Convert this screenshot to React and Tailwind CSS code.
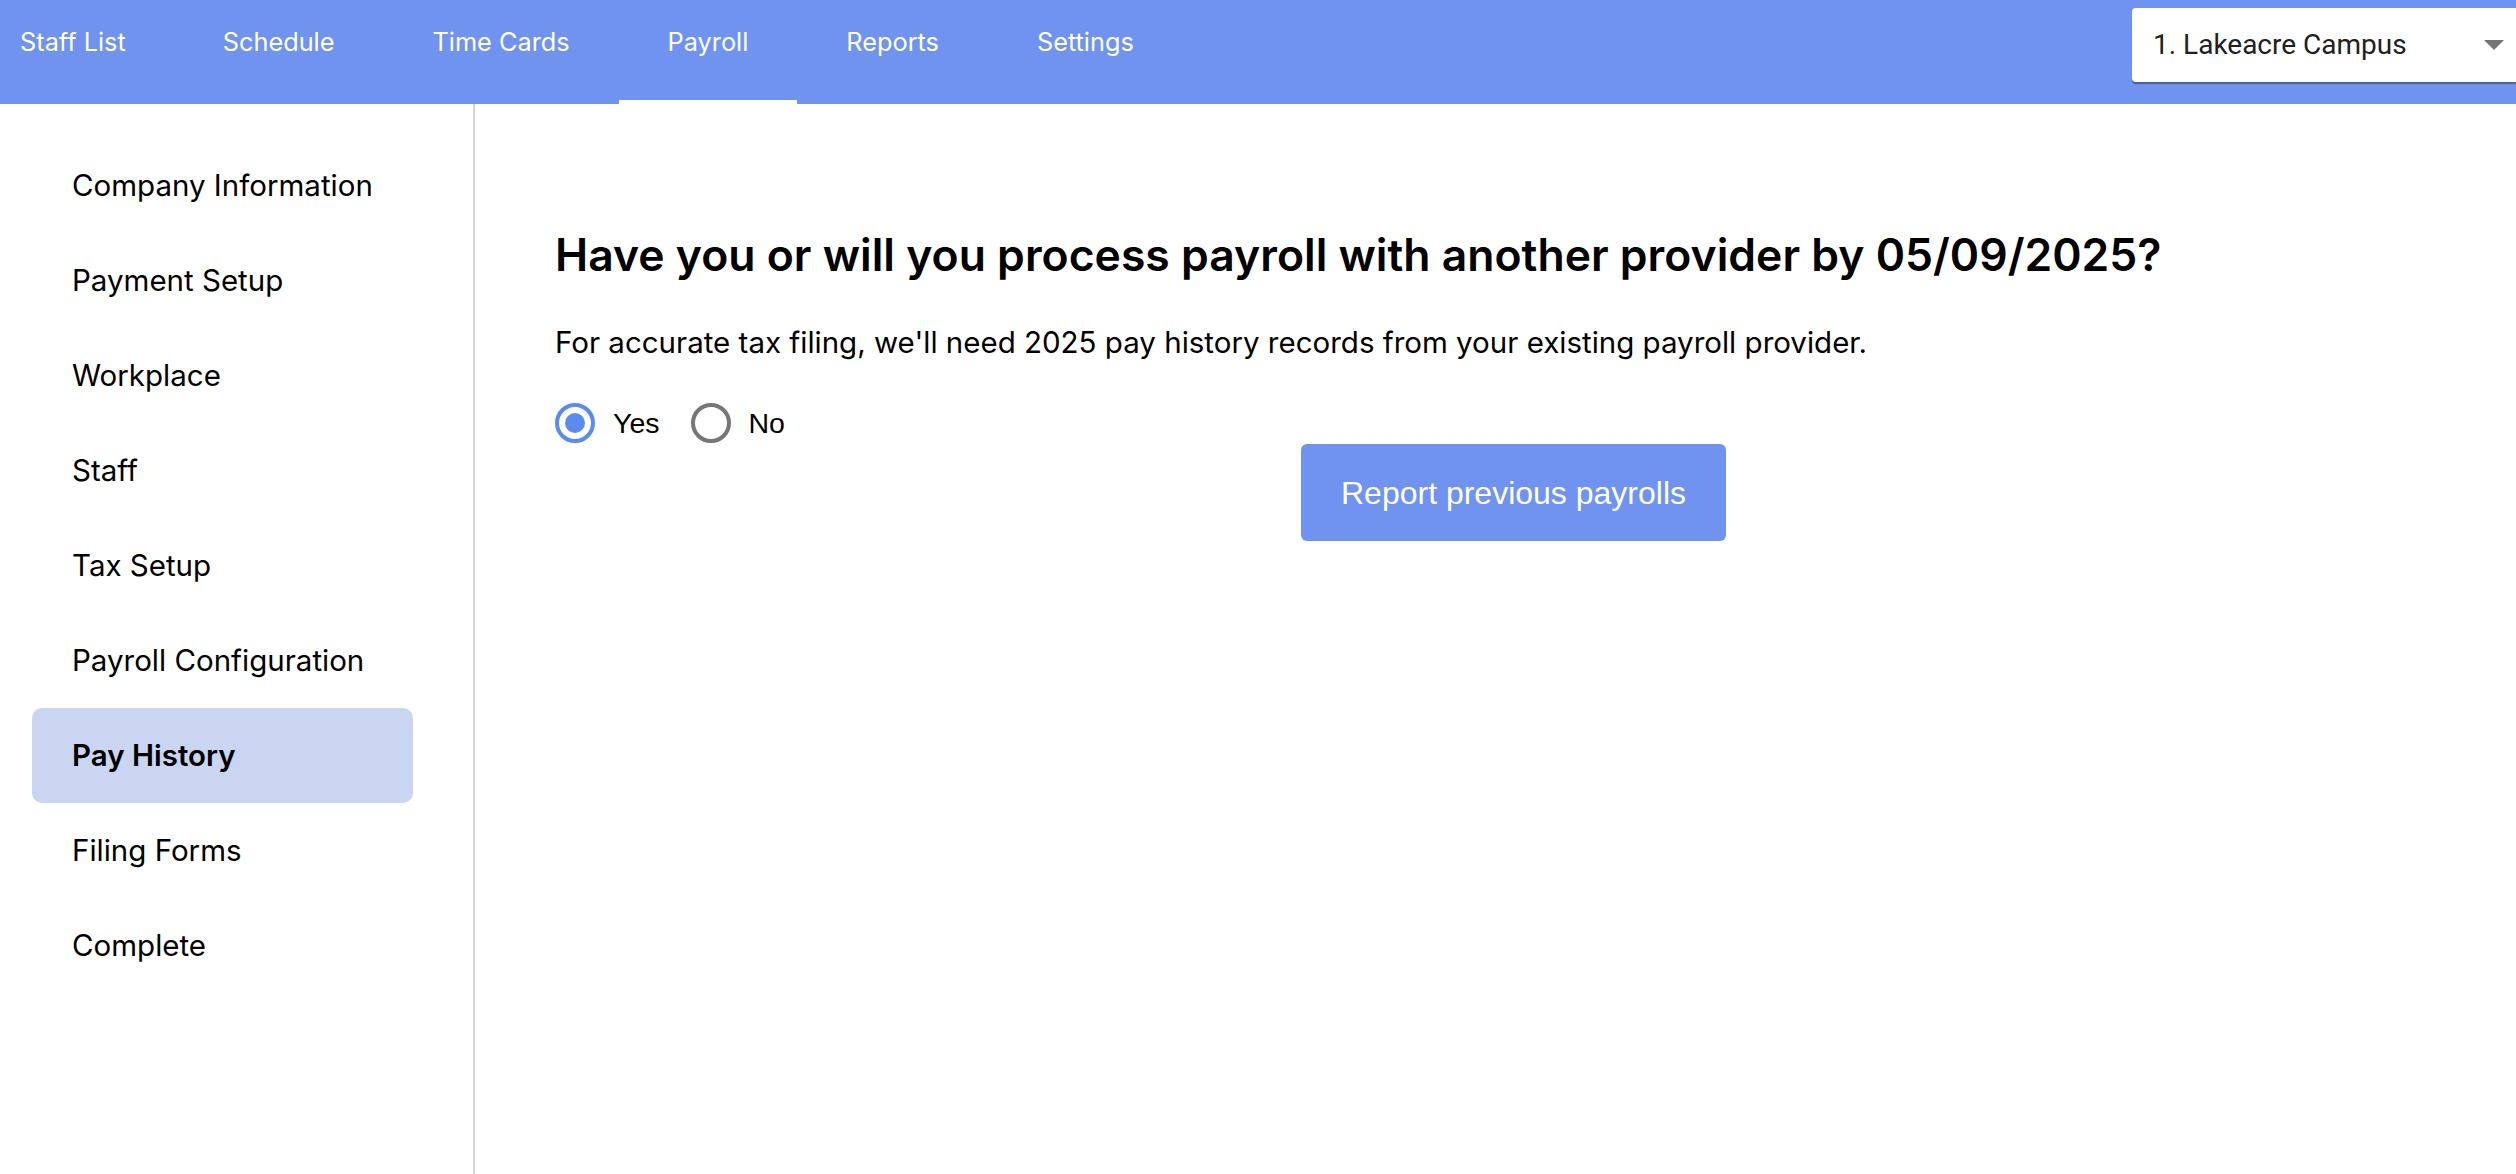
import { useState } from 'react';

const proxima = "font-['Inter','Open_Sans',sans-serif]";
const tabs = ['Staff List', 'Schedule', 'Time Cards', 'Payroll', 'Reports', 'Settings'];
const steps = [
  'Company Information',
  'Payment Setup',
  'Workplace',
  'Staff',
  'Tax Setup',
  'Payroll Configuration',
  'Pay History',
  'Filing Forms',
  'Complete',
];

function Radio({ checked, label, onClick }) {
  return (
    <button type="button" onClick={onClick} className="flex items-center cursor-pointer">
      <span
        className={`flex h-[40px] w-[40px] items-center justify-center rounded-full border-[4px] ${
          checked ? 'border-[#5a8cef]' : 'border-[#767676]'
        }`}
      >
        {checked && <span className="h-[20px] w-[20px] rounded-full bg-[#5a8cef]" />}
      </span>
      <span className="ml-[18px] font-['Liberation_Sans',Arial,sans-serif] text-[28.5px] leading-[40px] text-black">
        {label}
      </span>
    </button>
  );
}

export default function App() {
  const [answer, setAnswer] = useState('yes');

  return (
    <div className={`flex h-[1174px] flex-col bg-white ${proxima}`}>
      <header className="flex h-[104px] shrink-0 items-start justify-between bg-[#6f93ee]">
        <nav className="flex h-full">
          {tabs.map((t, i) => (
            <div key={t} className="flex h-full flex-col justify-between">
              <span
                className={`pt-[24px] text-[25.3px] leading-[36px] text-white ${
                  i === 0 ? 'pl-[20px] pr-[48px]' : 'px-[49px]'
                }`}
              >
                {t}
              </span>
              <span className={`h-[4px] ${t === 'Payroll' ? 'bg-white' : ''}`} />
            </div>
          ))}
        </nav>
        <div className="mt-[8px] flex h-[74px] w-[384px] items-center justify-between rounded-l-[4px] bg-white pl-[21px] pr-[12px] shadow-[0_2px_1px_rgba(0,0,0,0.35)]">
          <span className="font-['Roboto',sans-serif] text-[28px] text-[#212121]">1. Lakeacre Campus</span>
          <svg width="20" height="10" viewBox="0 0 20 10">
            <path d="M0 0h20L10 10z" fill="#757575" />
          </svg>
        </div>
      </header>

      <div className="flex flex-1">
        <aside className="w-[475px] shrink-0 border-r-2 border-[#d3d3d3] pt-[34px]">
          {steps.map((s) => (
            <div
              key={s}
              className={`ml-[32px] flex h-[95px] w-[381px] items-center rounded-[10px] pl-[40px] text-[29.5px] text-black ${
                s === 'Pay History' ? 'bg-[#cad5f2] font-semibold' : ''
              }`}
            >
              {s}
            </div>
          ))}
        </aside>

        <main className="w-[1997px] pl-[80px] pt-[124px]">
          <h1 className="text-[44.5px] font-semibold leading-[54px] text-black">
            Have you or will you process payroll with another provider by 05/09/2025?
          </h1>
          <p className="mt-[40px] text-[29.5px] leading-[40px] text-black">
            For accurate tax filing, we'll need 2025 pay history records from your existing payroll provider.
          </p>
          <div className="mt-[41px] flex h-[40px] items-center gap-[31px]">
            <Radio checked={answer === 'yes'} label="Yes" onClick={() => setAnswer('yes')} />
            <Radio checked={answer === 'no'} label="No" onClick={() => setAnswer('no')} />
          </div>
          <div className="mt-[1px] flex justify-center">
            <button
              type="button"
              className="h-[97px] w-[425px] rounded-[6px] bg-[#6f93ee] font-['Liberation_Sans',Arial,sans-serif] text-[32px] text-white"
            >
              Report previous payrolls
            </button>
          </div>
        </main>
      </div>
    </div>
  );
}
